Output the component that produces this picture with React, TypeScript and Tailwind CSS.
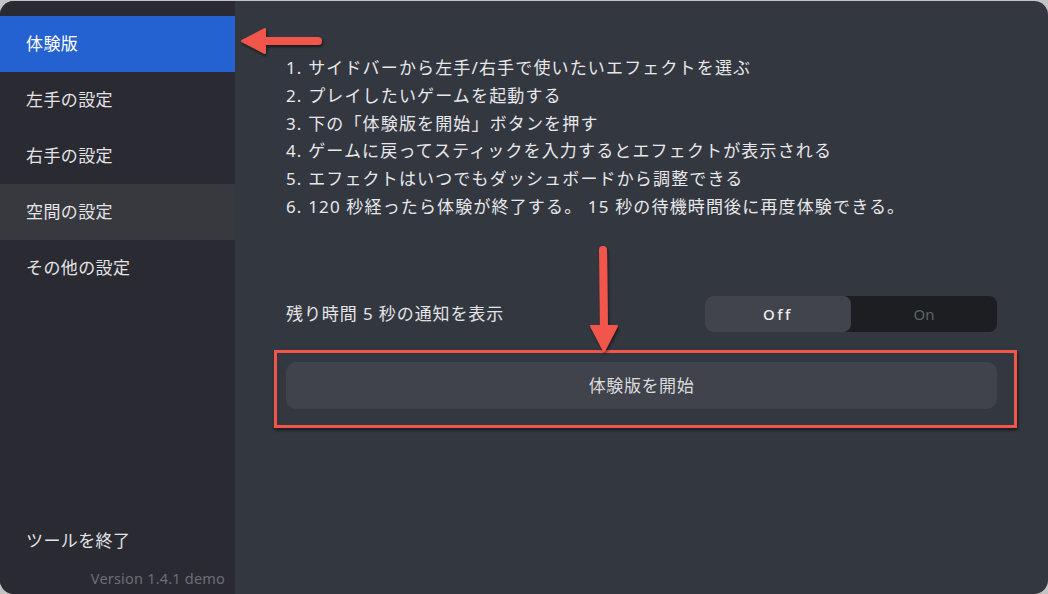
import React from "react";

const steps = [
  "1. サイドバーから左手/右手で使いたいエフェクトを選ぶ",
  "2. プレイしたいゲームを起動する",
  "3. 下の「体験版を開始」ボタンを押す",
  "4. ゲームに戻ってスティックを入力するとエフェクトが表示される",
  "5. エフェクトはいつでもダッシュボードから調整できる",
  "6. 120 秒経ったら体験が終了する。 15 秒の待機時間後に再度体験できる。",
];

const menu = [
  { label: "体験版", active: true },
  { label: "左手の設定" },
  { label: "右手の設定" },
  { label: "空間の設定", hover: true },
  { label: "その他の設定" },
];

const App = () => {
  return (
    <div
      className="w-[1048px] h-[594px] bg-[#c4c4c4] pt-px"
      style={{ fontFamily: '"Noto Sans", "Noto Sans CJK JP", sans-serif' }}
    >
      <div className="relative flex h-[593px] overflow-hidden rounded-[14px] bg-[#333740]">
        {/* sidebar */}
        <aside className="flex w-[235px] flex-col bg-[#2a2a32] pt-[15px]">
          {menu.map((m) => (
            <div
              key={m.label}
              className={
                "flex h-[56px] items-center pl-[26px] text-[17px] tracking-[0.4px] text-[#e4e4e6] " +
                (m.active ? "bg-[#2461d1] text-white" : m.hover ? "bg-[#38393f]" : "")
              }
            >
              {m.label}
            </div>
          ))}
          <div className="mt-auto flex h-[56px] items-center pl-[26px] text-[17px] tracking-[0.4px] text-[#e4e4e6]">
            ツールを終了
          </div>
          <div className="pb-[4px] pr-[10px] text-right text-[14.5px] tracking-[0.2px] text-[#6c6e76]">
            Version 1.4.1 demo
          </div>
        </aside>

        {/* main */}
        <main className="flex flex-1 flex-col pl-[51px] pr-[51px] pt-[53px]">
          <div className="flex flex-col text-[17px] leading-[27.8px] tracking-[1.15px] text-[#e8e8ea]">
            {steps.map((s) => (
              <div key={s}>{s}</div>
            ))}
          </div>

          <div className="mt-[75px] flex items-center justify-between">
            <span className="text-[17px] tracking-[0.9px] text-[#e4e4e6]">残り時間 5 秒の通知を表示</span>
            <div className="flex h-[36px] w-[292px] rounded-[8px] bg-[#1c1e22]">
              <div className="flex w-[146px] items-center justify-center rounded-[8px] bg-[#41444c] text-[15px] font-medium tracking-[2.5px] text-[#eeeeee]">
                Off
              </div>
              <div className="flex flex-1 items-center justify-center text-[15px] text-[#5f6269]">
                On
              </div>
            </div>
          </div>

          <button className="mt-[30px] h-[47px] w-full rounded-[10px] bg-[#40434b] text-[17px] tracking-[0.6px] text-[#dcdcde]">
            体験版を開始
          </button>
        </main>

        {/* annotations */}
        <div className="absolute left-[274px] top-[349px] h-[78px] w-[743px] border-[3px] border-[#f2554a] shadow-[1px_2px_3px_rgba(0,0,0,0.6)]" />
        <svg className="absolute left-0 top-0" width="1048" height="594">
          <defs>
            <filter id="sh" x="-20%" y="-20%" width="140%" height="140%">
              <feDropShadow dx="1" dy="2" stdDeviation="1.5" floodColor="#000" floodOpacity="0.55" />
            </filter>
          </defs>
          <g filter="url(#sh)" fill="#f2554a" stroke="#f2554a" strokeLinecap="round">
            <line x1="318" y1="40" x2="262" y2="40" strokeWidth="8" />
            <polygon points="242,40 265,28 265,52" strokeWidth="2" strokeLinejoin="round" />
            <line x1="603" y1="249" x2="604" y2="327" strokeWidth="8" />
            <polygon points="604,350 591,325 617,325" strokeWidth="2" strokeLinejoin="round" />
          </g>
        </svg>
      </div>
    </div>
  );
};

export default App;
